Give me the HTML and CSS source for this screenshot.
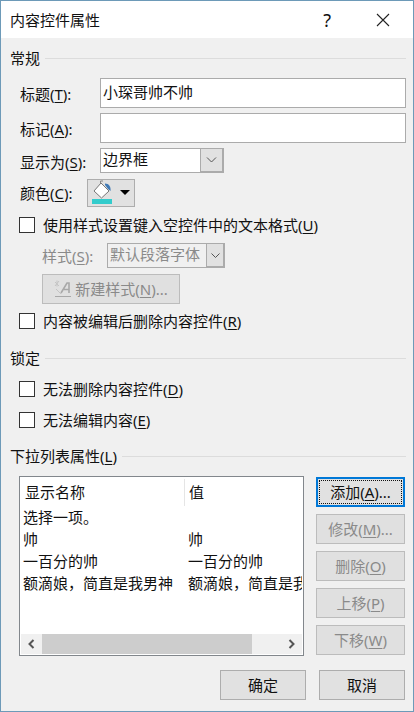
FILE: index.html
```html
<!DOCTYPE html>
<html lang="zh-CN">
<head>
  <meta charset="UTF-8" />
  <meta name="viewport" content="width=device-width, initial-scale=1.0" />
  <title>内容控件属性</title>
  <link rel="stylesheet" href="styles.css">
</head>
<body>
  <div class="dialog">
    <div class="titlebar">
      <span class="title">内容控件属性</span>
      <span class="help">?</span>
      <svg class="close" width="14" height="14" viewBox="0 0 14 14">
        <path d="M1 1 L13 13 M13 1 L1 13" stroke="#222" stroke-width="1.1" fill="none" />
      </svg>
    </div>

    <div class="content">
      <div class="group-head"><span>常规</span><i class="rule"></i></div>

      <div class="field field-title">
        <label class="field-label">标题(<u>T</u>):</label>
        <div class="textbox">小琛哥帅不帅</div>
      </div>
      <div class="field field-tag">
        <label class="field-label">标记(<u>A</u>):</label>
        <div class="textbox"></div>
      </div>
      <div class="field field-show">
        <label class="field-label">显示为(<u>S</u>):</label>
        <div class="combo combo-show">
          <span class="combo-value">边界框</span>
          <span class="combo-arrow">
            <svg width="11" height="6" viewBox="0 0 11 6"><path d="M1 0.5 L5.5 5 L10 0.5" stroke="#555" fill="none" /></svg>
          </span>
        </div>
      </div>
      <div class="field field-color">
        <label class="field-label color-label">颜色(<u>C</u>):</label>
        <div class="color-btn">
          <svg class="bucket" width="22" height="25" viewBox="0 0 22 25">
            <path d="M12 1 H9.5 V6" stroke="#888" fill="none" />
            <path d="M10 3 L18 11 L10.5 18 L3 11 Z" fill="#fff" stroke="#777" />
            <path d="M14 3.5 C18 3.5 20 7 19.5 11 L17 9 L14 5 Z" fill="#3f79b5" />
            <rect x="1" y="19" width="20" height="5" fill="#33cccc" />
          </svg>
          <span class="color-caret"></span>
        </div>
      </div>

      <div class="check check-format">
        <span class="box"></span><span>使用样式设置键入空控件中的文本格式(<u>U</u>)</span>
      </div>
      <div class="field field-style">
        <label class="style-label">样式(<u>S</u>):</label>
        <div class="combo combo-style">
          <span class="combo-value">默认段落字体</span>
          <span class="combo-arrow">
            <svg width="9" height="5" viewBox="0 0 9 5"><path d="M0.5 0.5 L4.5 4.5 L8.5 0.5" stroke="#555" fill="none" /></svg>
          </span>
        </div>
      </div>
      <div class="btn btn-off btn-newstyle">
        <svg width="18" height="18" viewBox="0 0 18 18">
          <path d="M1 2 L5 6 M5 1 L1 6 M3 0.5 V6.5" stroke="#c4c4c4" />
          <path d="M7 13 L13 3 H15 V13 M10 9.5 H15" stroke="#a8a8a8" stroke-width="1.6" fill="none" />
          <path d="M1 16.5 H17" stroke="#a8a8a8" />
          <path d="M2 9 L7 14" stroke="#c4c4c4" />
        </svg>
        <span>新建样式(<u>N</u>)...</span>
      </div>
      <div class="check check-remove">
        <span class="box"></span><span>内容被编辑后删除内容控件(<u>R</u>)</span>
      </div>

      <div class="group-head group-lock"><span>锁定</span><i class="rule"></i></div>
      <div class="check check-nodelete">
        <span class="box"></span><span>无法删除内容控件(<u>D</u>)</span>
      </div>
      <div class="check check-noedit">
        <span class="box"></span><span>无法编辑内容(<u>E</u>)</span>
      </div>

      <div class="group-head group-list"><span>下拉列表属性(<u>L</u>)</span><i class="rule"></i></div>
      <div class="list-area">
        <div class="listview">
          <div class="list-header">
            <span class="col-name">显示名称</span>
            <span class="col-value">值</span>
          </div>
          <div class="list-rows">
            <div class="list-row"><span class="cell-name">选择一项。</span><span class="cell-value"></span></div>
            <div class="list-row"><span class="cell-name">帅</span><span class="cell-value">帅</span></div>
            <div class="list-row"><span class="cell-name">一百分的帅</span><span class="cell-value">一百分的帅</span></div>
            <div class="list-row"><span class="cell-name">额滴娘，简直是我男神</span><span class="cell-value">额滴娘，简直是我男神</span></div>
          </div>
          <div class="hscroll">
            <svg class="scroll-arrow" width="7" height="10" viewBox="0 0 7 10"><path d="M5.5 1 L1.5 5 L5.5 9" stroke="#555" stroke-width="2" fill="none" /></svg>
            <div class="scroll-track"><div class="scroll-thumb"></div></div>
            <svg class="scroll-arrow" width="7" height="10" viewBox="0 0 7 10"><path d="M1.5 1 L5.5 5 L1.5 9" stroke="#555" stroke-width="2" fill="none" /></svg>
          </div>
        </div>
        <div class="list-buttons">
          <div class="btn btn-default"><span class="focus-ring">添加(<u>A</u>)...</span></div>
          <div class="btn btn-off">修改(<u>M</u>)...</div>
          <div class="btn btn-off">删除(<u>O</u>)</div>
          <div class="btn btn-off">上移(<u>P</u>)</div>
          <div class="btn btn-off">下移(<u>W</u>)</div>
        </div>
      </div>

      <div class="footer">
        <div class="btn btn-footer">确定</div>
        <div class="btn btn-footer">取消</div>
      </div>
    </div>
  </div>
</body>
</html>
```

FILE: styles.css
```css
* {
  box-sizing: border-box;
}
html, body {
  margin: 0;
  padding: 0;
}
body {
  font-family: "Noto Sans", "Noto Sans CJK SC", sans-serif;
  font-size: 15px;
  line-height: 20px;
  color: #111;
  background: #f0f0f0;
}
u {
  text-underline-offset: 2px;
}
.dialog {
  width: 414px;
  height: 712px;
  border: 1px solid #6d9ab8;
  background: #f0f0f0;
  overflow: hidden;
}

/* title bar */
.titlebar {
  display: flex;
  align-items: center;
  height: 37px;
  padding-left: 9px;
  background: #fff;
}
.title {
  flex: 1;
}
.help {
  font-size: 18px;
  margin-right: 45px;
}
.close {
  margin-right: 23px;
}

/* main area */
.content {
  padding: 10px 7px 0 9px;
}
.group-head {
  display: flex;
  align-items: center;
  height: 20px;
}
.rule {
  flex: 1;
  height: 1px;
  margin-left: 5px;
  background: #dcdcdc;
}
.group-lock {
  margin-top: 17px;
}
.group-list {
  margin-top: 16px;
}
.field {
  display: flex;
  align-items: center;
  margin-left: 10px;
}
.field-title {
  margin-top: 10px;
}
.field-tag {
  margin-top: 5px;
}
.field-show {
  margin-top: 5px;
}
.field-color {
  margin-top: 6px;
}
.field-style {
  margin-top: 8px;
  margin-left: 32px;
  color: #8a8a8a;
}
.field-label {
  width: 80px;
  flex: none;
  padding-top: 2px;
}
.color-label {
  width: 67px;
  padding-top: 0;
}
.style-label {
  width: 65px;
  flex: none;
}
.textbox {
  flex: 1;
  height: 30px;
  padding: 3px 2px;
  background: #fff;
  border: 1px solid #ababab;
}

/* combos */
.combo {
  display: flex;
  background: #fff;
  border: 1px solid #ababab;
}
.combo-show {
  width: 124px;
  height: 25px;
}
.combo-style {
  width: 118px;
  height: 25px;
  background: #f0f0f0;
  color: #8a8a8a;
}
.combo-value {
  flex: 1;
  padding-left: 2px;
  white-space: nowrap;
  overflow: hidden;
}
.combo-arrow {
  display: flex;
  align-items: center;
  justify-content: center;
  flex: none;
  width: 23px;
  background: #e1e1e1;
  border-left: 1px solid #ababab;
  border-right: 1px solid #ababab;
  border-bottom: 1px solid #ababab;
}
.combo-style .combo-arrow {
  width: 18px;
}

/* colour picker */
.color-btn {
  display: flex;
  align-items: center;
  width: 48px;
  height: 28px;
  padding-left: 3px;
  background: #e1e1e1;
  border: 1px solid #adadad;
}
.bucket {
  margin-bottom: 2px;
}
.color-caret {
  margin-left: 7px;
  margin-bottom: 1px;
  border-left: 5px solid transparent;
  border-right: 5px solid transparent;
  border-top: 5px solid #000;
}

/* checkboxes */
.check {
  display: flex;
  align-items: center;
  gap: 8px;
  height: 20px;
  margin-left: 9px;
}
.box {
  width: 16px;
  height: 16px;
  flex: none;
  background: #fff;
  border: 1px solid #333;
}
.check-format {
  margin-top: 8px;
}
.check-remove {
  margin-top: 7px;
}
.check-nodelete {
  margin-top: 11px;
}
.check-noedit {
  margin-top: 11px;
}

/* buttons */
.btn {
  display: flex;
  align-items: center;
  justify-content: center;
  height: 30px;
  background: #e1e1e1;
  border: 1px solid #adadad;
}
.btn-off {
  color: #8a8a8a;
  background: #e0e0e0;
  border-color: #bcbcbc;
}
.btn-newstyle {
  width: 138px;
  margin-top: 6px;
  margin-left: 32px;
  gap: 3px;
}
.btn-default {
  padding: 1px;
  border: 2px solid #0078d7;
  color: #111;
}
.focus-ring {
  display: flex;
  align-items: center;
  justify-content: center;
  width: 100%;
  height: 100%;
  border: 1px dotted #111;
}
.btn-footer {
  width: 86px;
}

/* list */
.list-area {
  display: flex;
  margin-top: 10px;
  margin-left: 9px;
}
.listview {
  display: flex;
  flex-direction: column;
  width: 285px;
  height: 180px;
  background: #fff;
  border: 1px solid #82878c;
  overflow: hidden;
}
.list-header {
  display: flex;
  height: 28px;
  margin-top: 1px;
  align-items: center;
  flex: none;
}
.col-name {
  width: 165px;
  padding-left: 5px;
  flex: none;
  height: 27px;
  line-height: 27px;
  border-right: 1px solid #e5e5e5;
}
.col-value {
  padding-left: 4px;
  height: 27px;
  line-height: 27px;
}
.list-rows {
  flex: 1;
  overflow: hidden;
}
.list-row {
  display: flex;
  height: 22px;
  line-height: 22px;
  white-space: nowrap;
}
.cell-name {
  width: 165px;
  padding-left: 3px;
  flex: none;
}
.cell-value {
  flex: none;
  width: 117px;
  overflow: hidden;
  padding-left: 3px;
}
.hscroll {
  display: flex;
  align-items: center;
  flex: none;
  height: 20px;
  margin: 0 1px 1px;
  background: #f0f0f0;
}
.scroll-arrow {
  flex: none;
  margin: 0 7px;
}
.scroll-track {
  flex: 1;
  height: 100%;
}
.scroll-thumb {
  width: 210px;
  height: 100%;
  background: #cdcdcd;
}
.list-buttons {
  display: flex;
  flex-direction: column;
  gap: 7px;
  width: 89px;
  margin-left: 12px;
  padding-top: 1px;
}
.footer {
  display: flex;
  justify-content: flex-end;
  gap: 13px;
  margin-top: 14px;
  margin-right: 1px;
}
```
